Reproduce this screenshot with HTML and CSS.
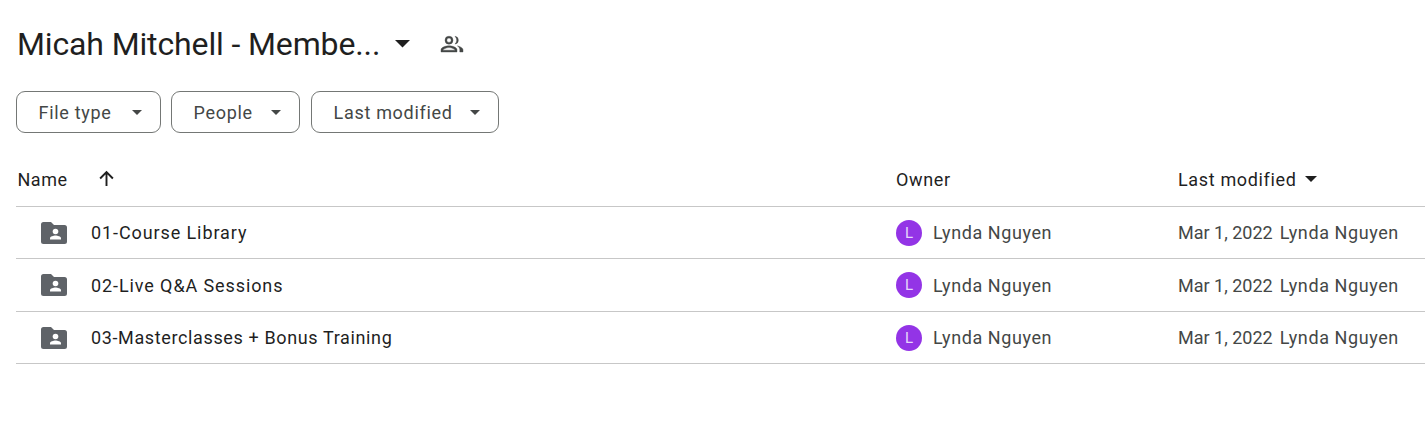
FILE: index.html
```html
<!DOCTYPE html>
<html lang="en">
<head>
<meta charset="utf-8">
<title>Micah Mitchell - Members</title>
<link rel="stylesheet" href="styles.css">
</head>
<body>
<main class="page">
  <header class="title-bar">
    <h1 class="title">Micah Mitchell - Membe...</h1>
    <svg class="title-caret" viewBox="0 0 16 8" aria-hidden="true"><path d="M0 0h16L8 8z"/></svg>
    <svg class="shared-icon" viewBox="0 0 24 24" aria-hidden="true"><path d="M9 12.200a4 4 0 1 0 0-8 4 4 0 0 0 0 8zm0-6.200a2.200 2.200 0 1 1 0 4.400A2.200 2.200 0 0 1 9 6zM9 13.800c-2.700 0-8 1.300-8 4V20h16v-2.200c0-2.700-5.300-4-8-4zM2.900 18.200c.4-1.100 3.600-2.600 6.100-2.600s5.700 1.500 6.100 2.600zM15 12.100a4 4 0 0 0 0-7.900 6 6 0 0 1 0 7.900zM17.500 13.900c1.500.9 2.300 2.200 2.300 3.900V20H23v-2.200c0-2-3-3.400-5.500-3.900z"/></svg>
  </header>

  <div class="filters">
    <button class="chip chip-type">File type<svg class="chip-caret" viewBox="0 0 10 5" aria-hidden="true"><path d="M0 0h10L5 5z"/></svg></button>
    <button class="chip chip-people">People<svg class="chip-caret" viewBox="0 0 10 5" aria-hidden="true"><path d="M0 0h10L5 5z"/></svg></button>
    <button class="chip chip-modified">Last modified<svg class="chip-caret" viewBox="0 0 10 5" aria-hidden="true"><path d="M0 0h10L5 5z"/></svg></button>
  </div>

  <section class="table">
    <div class="row head">
      <div class="cell name-head">Name
        <svg class="sort-arrow" viewBox="0 0 16 16" aria-hidden="true"><path d="M8 15V2M2 8l6-6 6 6"/></svg>
      </div>
      <div class="cell">Owner</div>
      <div class="cell">Last modified<svg class="head-caret" viewBox="0 0 12 6" aria-hidden="true"><path d="M0 0h12L6 6z"/></svg></div>
    </div>

    <div class="row item">
      <div class="cell file file-short">
        <svg class="folder" viewBox="0 0 26 22" aria-hidden="true"><path class="folder-body" d="M2.500 0h7.500l3 3h10.500A2.500 2.500 0 0 1 26 5.500v14a2.500 2.500 0 0 1-2.500 2.500h-21A2.500 2.500 0 0 1 0 19.500v-17A2.500 2.500 0 0 1 2.500 0z"/><circle class="folder-person" cx="14.500" cy="9.500" r="2.800"/><path class="folder-person" d="M9 17.500v-1.300c0-1.700 3.600-2.700 5.500-2.700s5.500 1 5.500 2.700v1.300z"/></svg>
        <span>01-Course Library</span>
      </div>
      <div class="cell owner"><span class="avatar">L</span><span class="person">Lynda Nguyen</span></div>
      <div class="cell meta"><span class="date">Mar 1, 2022</span><span class="person">Lynda Nguyen</span></div>
    </div>

    <div class="row item">
      <div class="cell file file-short">
        <svg class="folder" viewBox="0 0 26 22" aria-hidden="true"><path class="folder-body" d="M2.500 0h7.500l3 3h10.500A2.500 2.500 0 0 1 26 5.500v14a2.500 2.500 0 0 1-2.500 2.500h-21A2.500 2.500 0 0 1 0 19.500v-17A2.500 2.500 0 0 1 2.500 0z"/><circle class="folder-person" cx="14.500" cy="9.500" r="2.800"/><path class="folder-person" d="M9 17.500v-1.300c0-1.700 3.600-2.700 5.500-2.700s5.500 1 5.500 2.700v1.300z"/></svg>
        <span>02-Live Q&amp;A Sessions</span>
      </div>
      <div class="cell owner"><span class="avatar">L</span><span class="person">Lynda Nguyen</span></div>
      <div class="cell meta"><span class="date">Mar 1, 2022</span><span class="person">Lynda Nguyen</span></div>
    </div>

    <div class="row item">
      <div class="cell file">
        <svg class="folder" viewBox="0 0 26 22" aria-hidden="true"><path class="folder-body" d="M2.500 0h7.500l3 3h10.500A2.500 2.500 0 0 1 26 5.500v14a2.500 2.500 0 0 1-2.500 2.500h-21A2.500 2.500 0 0 1 0 19.500v-17A2.500 2.500 0 0 1 2.500 0z"/><circle class="folder-person" cx="14.500" cy="9.500" r="2.800"/><path class="folder-person" d="M9 17.500v-1.300c0-1.700 3.600-2.700 5.500-2.700s5.500 1 5.500 2.700v1.300z"/></svg>
        <span>03-Masterclasses + Bonus Training</span>
      </div>
      <div class="cell owner"><span class="avatar">L</span><span class="person">Lynda Nguyen</span></div>
      <div class="cell meta"><span class="date">Mar 1, 2022</span><span class="person">Lynda Nguyen</span></div>
    </div>
  </section>
</main>
</body>
</html>
```

FILE: styles.css
```css
* { box-sizing: border-box; }

html, body {
  margin: 0;
  background: #fff;
  overflow: hidden;
}

body {
  font-family: Roboto, "Noto Sans", sans-serif;
  color: #1f1f1f;
}

.page {
  width: 1425px;
  height: 421px;
  padding: 19px 0 0 16px;
}

.title-bar {
  display: flex;
  align-items: center;
  height: 50px;
}

.title {
  margin: 0 0 0 1px;
  font-size: 32px;
  font-weight: 400;
  line-height: 50px;
  letter-spacing: -0.13px;
  white-space: nowrap;
}

.title-caret {
  width: 15px;
  height: 7.500px;
  margin: 0 0 0 15px;
  fill: #1f1f1f;
}

.shared-icon {
  width: 24px;
  height: 24px;
  margin-left: 30px;
  fill: #444746;
  stroke: #444746;
  stroke-width: 0.4;
}

.filters {
  display: flex;
  gap: 10px;
  margin-top: 22px;
}

.chip {
  display: flex;
  align-items: center;
  justify-content: space-between;
  height: 42px;
  padding: 0 18.500px 0 21.500px;
  border: 1px solid #747775;
  border-radius: 9px;
  background: #fff;
  color: #444746;
  font: 400 18px Roboto, sans-serif;
  letter-spacing: 0.7px;
}

.chip-type { width: 145px; }
.chip-people { width: 129px; }
.chip-modified { width: 188px; margin-left: 1px; }

.chip-caret {
  width: 10px;
  height: 5px;
  fill: #444746;
}

.table {
  margin-top: 21px;
  width: 1409px;
}

.row {
  display: grid;
  grid-template-columns: 880px 282px 1fr;
  align-items: center;
  border-bottom: 1px solid #c7c7c7;
}

.head {
  height: 52.800px;
  padding-bottom: 1px;
  font-size: 18px;
  letter-spacing: 0.65px;
  color: #1f1f1f;
}

.item {
  height: 52.500px;
  font-size: 18px;
}

.cell {
  display: flex;
  align-items: center;
  white-space: nowrap;
}

.name-head { padding-left: 1.500px; letter-spacing: 0.5px; }

.sort-arrow {
  width: 17px;
  height: 17px;
  margin: 0 0 1px 31px;
  fill: none;
  stroke: #1f1f1f;
  stroke-width: 1.800;
}

.head-caret {
  width: 12px;
  height: 6px;
  margin-left: 8px;
  fill: #1f1f1f;
}

.file { padding-left: 25px; letter-spacing: 0.63px; }
.file-short { letter-spacing: 0.9px; }

.folder {
  width: 26px;
  height: 22px;
  margin-right: 24px;
}

.folder-body { fill: #5f6368; }
.folder-person { fill: #fff; }

.owner, .meta { color: #444746; }

.person { letter-spacing: 0.58px; }

.avatar {
  display: flex;
  align-items: center;
  justify-content: center;
  width: 26px;
  height: 26px;
  margin-right: 11px;
  border-radius: 50%;
  background: #9334e6;
  color: #e6d6fa;
  font-size: 15px;
}

.date { margin-right: 7px; }
```
